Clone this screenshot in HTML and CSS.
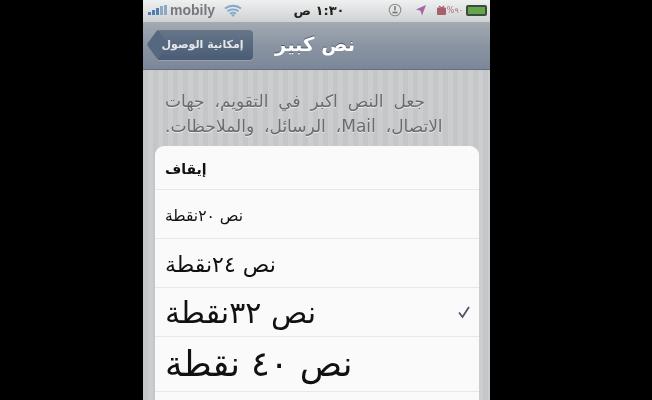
FILE: index.html
```html
<!DOCTYPE html>
<html lang="ar">
<head>
<meta charset="utf-8">
<title>نص كبير</title>
<link rel="stylesheet" href="styles.css">
</head>
<body>
<main class="phone">
  <header class="status" dir="ltr">
    <div class="status-left">
      <svg class="signal" viewBox="0 0 22 10" width="22" height="10"><rect x="0" y="7" width="3" height="3"/><rect x="4" y="5" width="3" height="5"/><rect x="8" y="3" width="3" height="7"/><rect x="12" y="1" width="3" height="9" class="dim"/><rect x="16" y="0" width="3" height="10" class="dim"/></svg>
      <span class="carrier">mobily</span>
      <svg class="wifi" viewBox="0 0 18 13" width="18" height="13"><path d="M1 4.500C5.500.8 12.500.8 17 4.500M3.500 7.200C6.500 4.800 11.500 4.800 14.500 7.200M6 9.700C7.800 8.500 10.200 8.500 12 9.700" fill="none" stroke="#7fa8c8" stroke-width="1.800"/><path d="M9 13L7 10.800Q9 9.800 11 10.800Z" fill="#7fa8c8"/></svg>
    </div>
    <div class="clock" dir="rtl">١:٣٠ ص</div>
    <div class="status-right">
      <svg viewBox="0 0 14 14" width="14" height="14"><circle cx="7" cy="7" r="5.800" fill="none" stroke="#8b8f88" stroke-width="1.100"/><path d="M7 3v4.500M4.500 9.500h5" stroke="#6d706a" stroke-width="1.400" fill="none"/></svg>
      <svg class="gap-l" viewBox="0 0 12 12" width="12" height="12"><path d="M11 1L1 5.500l4.500 1.200L7 11.500Z" fill="#a565a8"/></svg>
      <svg class="gap-m" viewBox="0 0 11 11" width="11" height="11"><rect x="1" y="2.500" width="9" height="7.500" rx="1" fill="#a8606a"/><path d="M3 1l5 4M8 1L4 5" stroke="#a8606a" stroke-width="1.200"/></svg>
      <span class="percent">%٩٠</span>
      <div class="battery"><span class="battery-fill"></span></div>
    </div>
  </header>
  <nav class="navbar" dir="ltr">
    <a class="back" dir="rtl"><span class="back-tip"></span><span class="back-label">إمكانية الوصول</span></a>
    <h1 class="nav-title" dir="rtl">نص كبير</h1>
  </nav>
  <section class="content" dir="rtl">
    <p class="note">جعل النص اكبر في التقويم، جهات<br>الاتصال، Mail، الرسائل، والملاحظات.</p>
    <ul class="card">
      <li class="row r-off"><span>إيقاف</span></li>
      <li class="row r-20"><span>نص ٢٠نقطة</span></li>
      <li class="row r-24"><span>نص ٢٤نقطة</span></li>
      <li class="row r-32"><svg class="check" viewBox="0 0 14 14" width="14" height="14"><path d="M2 7.500L5.500 12 12 2" fill="none" stroke="#4c5566" stroke-width="1.800"/></svg><span>نص ٣٢نقطة</span></li>
      <li class="row r-40"><span>نص ٤٠ نقطة</span></li>
      <li class="row r-end"></li>
    </ul>
  </section>
</main>
</body>
</html>
```
FILE: styles.css
```css
* { box-sizing: border-box; }
html, body { margin: 0; height: 400px; overflow: hidden; background: #000; }
body { font-family: "DejaVu Sans", "Liberation Sans", sans-serif; }
.phone { width: 347px; height: 400px; margin-left: 143px; display: flex; flex-direction: column; overflow: hidden; background: #c9cacb; filter: blur(.7px); }

.status { height: 22px; flex: none; display: flex; align-items: center; justify-content: space-between; padding: 0 3px 2px 5px; background: linear-gradient(#eff0f0, #cfd1d3); color: #333; }
.status-left { width: 107px; display: flex; align-items: center; }
.signal rect { fill: #4f7fb0; }
.signal .dim { fill: #8fa9c2; }
.carrier { font: bold 14px "Liberation Sans", sans-serif; color: #75797f; margin-right: 9px; }
.clock { font-size: 13px; font-weight: bold; color: #222; white-space: nowrap; }
.status-right { width: 104px; display: flex; align-items: center; justify-content: flex-end; }
.gap-l { margin-left: 13px; }
.gap-m { margin-left: 9px; }
.percent { font-size: 8px; color: #b0707a; }
.battery { width: 21px; height: 11px; margin-left: 3px; border-radius: 2px; background: #3e4a3c; padding: 2px; }
.battery-fill { display: block; height: 100%; background: #62a64e; }

.navbar { height: 48px; flex: none; display: flex; align-items: center; padding: 0 0 2px 15px; background: linear-gradient(#a4aab2, #8a94a2 50%, #7b8799); border-bottom: 1px solid #666f7c; }
.back { position: relative; width: 95px; height: 30px; flex: none; display: flex; align-items: center; justify-content: center; background: linear-gradient(#66768a, #4a5c75); border-radius: 0 4px 4px 0; box-shadow: 0 1px 0 #97a1ad; }
.back-tip { position: absolute; left: -11px; top: 4.400px; width: 21.200px; height: 21.200px; transform: scaleX(.73) rotate(45deg); background: #566880; border-radius: 2px; }
.back-label { position: relative; left: -3px; font-size: 11px; font-weight: bold; color: #e4e7eb; white-space: nowrap; }
.nav-title { margin: 0 0 0 22px; font-size: 19.500px; font-weight: bold; color: #fff; text-shadow: 0 -1px 0 #505a68; white-space: nowrap; }

.content { flex: 1; min-height: 0; display: flex; flex-direction: column; padding: 19px 11px 0 12px; background: repeating-linear-gradient(90deg, #c4c6c7 0 5px, #cbcdce 5px 10px); }
.note { flex: none; margin: 0 10px; height: 57px; font-size: 17px; word-spacing: 4.500px; line-height: 25px; text-align: left; white-space: nowrap; color: #686c70; text-shadow: 0 1px 0 #e6e7e8; }
.card { flex: 1; margin: 0; padding: 0; list-style: none; background: #fafafa; border-radius: 9px 9px 0 0; }
.row { display: flex; align-items: center; justify-content: flex-end; padding: 3px 8px 0 10px; color: #111; border-bottom: 1px solid #e8e8e8; white-space: nowrap; }
.row span { flex: none; }
.r-off { height: 44px; font-size: 14px; font-weight: bold; }
.r-20 { height: 49px; font-size: 15.500px; }
.r-24 { height: 49px; font-size: 22px; }
.r-32 { height: 49px; font-size: 30px; padding-top: 0; justify-content: space-between; }
.r-40 { height: 55px; font-size: 35px; padding-top: 0; }
.r-end { border-bottom: 0; }
.check { margin-top: 0; }
```
